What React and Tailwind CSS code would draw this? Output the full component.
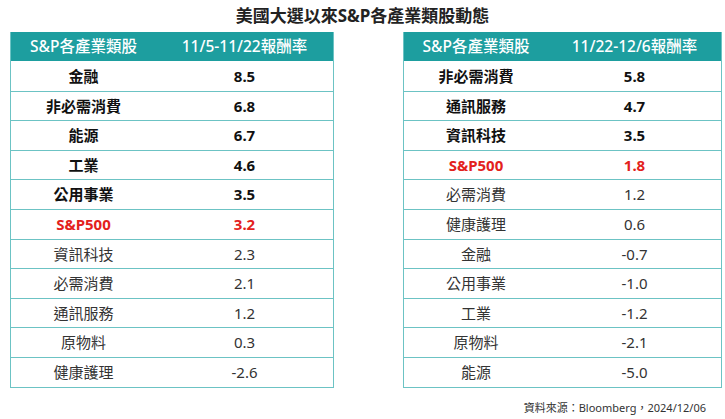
import React from 'react'

const left = {
  period: '11/5-11/22報酬率',
  rows: [
    ['金融', '8.5', 'bold'],
    ['非必需消費', '6.8', 'bold'],
    ['能源', '6.7', 'bold'],
    ['工業', '4.6', 'bold'],
    ['公用事業', '3.5', 'bold'],
    ['S&P500', '3.2', 'red'],
    ['資訊科技', '2.3'],
    ['必需消費', '2.1'],
    ['通訊服務', '1.2'],
    ['原物料', '0.3'],
    ['健康護理', '-2.6'],
  ],
}

const right = {
  period: '11/22-12/6報酬率',
  rows: [
    ['非必需消費', '5.8', 'bold'],
    ['通訊服務', '4.7', 'bold'],
    ['資訊科技', '3.5', 'bold'],
    ['S&P500', '1.8', 'red'],
    ['必需消費', '1.2'],
    ['健康護理', '0.6'],
    ['金融', '-0.7'],
    ['公用事業', '-1.0'],
    ['工業', '-1.2'],
    ['原物料', '-2.1'],
    ['能源', '-5.0'],
  ],
}

function RateTable({ data, width, split }) {
  return (
    <div className={`${width} border-x border-b border-[#6cc3c4]`}>
      {/* header */}
      <div className="flex h-[29px] items-center bg-[#1d9e9f] text-white text-[15.5px] font-medium">
        <div className={`${split} text-center`}>S&amp;P各產業類股</div>
        <div className="flex-1 text-center">{data.period}</div>
      </div>
      {data.rows.map(([name, val, kind], i) => {
        const tone =
          kind === 'red'
            ? 'font-bold text-[#e3211c]'
            : kind === 'bold'
            ? 'font-bold text-[#111]'
            : 'font-normal text-[#333]'
        return (
          <div
            key={name}
            className={`flex h-[29.6px] items-center text-[15px] ${tone} ${i > 0 ? 'border-t border-[#6cc3c4]' : ''}`}
          >
            <div className={`${split} text-center`}>{name}</div>
            <div className="flex-1 text-center">{val}</div>
          </div>
        )
      })}
    </div>
  )
}

export default function App() {
  return (
    <div
      className="w-[725px] h-[419px] bg-white overflow-hidden"
      style={{ fontFamily: '"Noto Sans", "Noto Sans CJK TC", sans-serif' }}
    >
      <div className="h-[32px] flex items-center justify-center">
        <h1 className="text-[17px] font-bold text-[#222] pb-[1px]">美國大選以來S&amp;P各產業類股動態</h1>
      </div>

      <div className="flex">
        <div className="ml-[10px]">
          <RateTable data={left} width="w-[324px]" split="w-[145px]" />
        </div>
        <div className="ml-[69px]">
          <RateTable data={right} width="w-[319px]" split="w-[144px]" />
        </div>
      </div>

      <div className="flex justify-end pr-[19px] pt-[12px]">
        <span className="text-[11px] text-[#333]">資料來源：Bloomberg，2024/12/06</span>
      </div>
    </div>
  )
}
